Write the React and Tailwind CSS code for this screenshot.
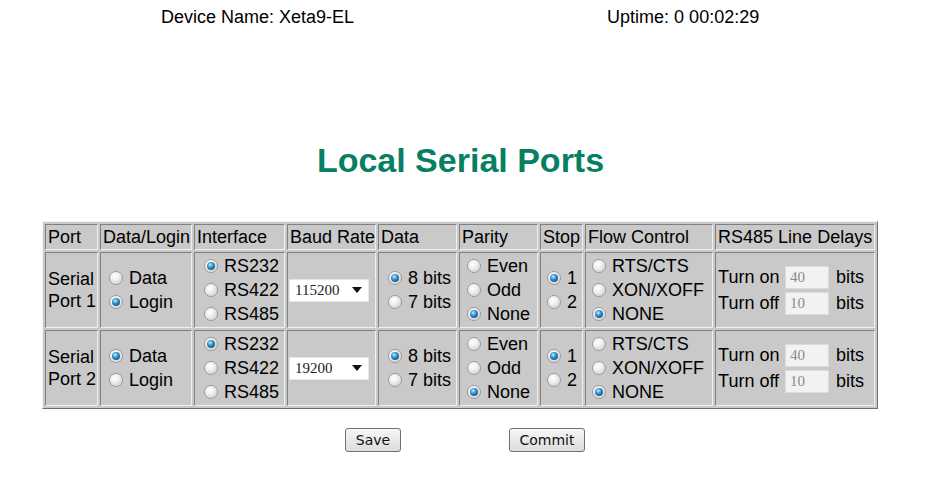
import React from "react";

const Radio = ({ checked }) => (
  <span className="relative inline-flex w-[14px] h-[14px] shrink-0 items-center justify-center rounded-full border border-[#9a9a9a] bg-[radial-gradient(circle_at_40%_35%,#ffffff_0%,#efefef_40%,#bdbdbd_100%)] shadow-[inset_0_0_1px_#ffffff]">
    {checked && (
      <span className="w-[8px] h-[8px] rounded-full bg-[radial-gradient(circle_at_40%_35%,#c2f0ff_0%,#2f8fc6_40%,#083a60_100%)]" />
    )}
  </span>
);

const Opt = ({ checked, label }) => (
  <div className="flex items-center h-[24px]">
    <Radio checked={checked} />
    <span className="ml-[6px]">{label}</span>
  </div>
);

const Group = ({ options, value, pl = "pl-[8px]" }) => (
  <div className={`flex flex-col ${pl}`}>
    {options.map((o) => (
      <Opt key={o} label={o} checked={o === value} />
    ))}
  </div>
);

const Select = ({ value }) => (
  <div className="flex items-center justify-between w-[80px] h-[23px] bg-white border border-[#e6e6e6] pl-[5px] pr-[6px] font-['Liberation_Serif',serif] text-[15px] text-[#222]">
    <span>{value}</span>
    <span className="w-0 h-0 border-l-[5px] border-r-[5px] border-t-[6px] border-l-transparent border-r-transparent border-t-[#111]" />
  </div>
);

const Delay = ({ label, value }) => (
  <div className="flex items-center h-[26px]">
    <span className="w-[67px]">{label}</span>
    <div className="w-[44px] h-[23px] bg-[#f2f2f2] border border-[#dcdcdc] pl-[4px] flex items-center font-['Liberation_Serif',serif] text-[15px] text-[#8a8a8a]">
      {value}
    </div>
    <span className="ml-[7px]">bits</span>
  </div>
);

const cell =
  "border border-t-[#808080] border-l-[#808080] border-r-[#f0f0f0] border-b-[#f0f0f0] p-0 align-middle";

const ports = [
  { n: 1, mode: "Login", iface: "RS232", baud: "115200", data: "8 bits", parity: "None", stop: "1", flow: "NONE" },
  { n: 2, mode: "Data", iface: "RS232", baud: "19200", data: "8 bits", parity: "None", stop: "1", flow: "NONE" },
];

const heads = [
  ["Port", "w-[53px]"],
  ["Data/Login", "w-[92px]"],
  ["Interface", "w-[91px]"],
  ["Baud Rate", "w-[89px]"],
  ["Data", "w-[79px]"],
  ["Parity", "w-[79px]"],
  ["Stop", "w-[43px]"],
  ["Flow Control", "w-[128px]"],
  ["RS485 Line Delays", "w-[160px]"],
];

export default function App() {
  return (
    <div className="w-[921px] bg-white text-black font-['Liberation_Sans',Arial,sans-serif] min-h-[497px]">
      {/* Status bar */}
      <div className="flex pt-[6px] text-[18px] leading-[22px]">
        <span className="ml-[161px]">Device Name: Xeta9-EL</span>
        <span className="ml-[253px]">Uptime: 0 00:02:29</span>
      </div>

      <h1 className="mt-[112px] text-center text-[34px] leading-[40px] font-bold text-[#077f62]">
        Local Serial Ports
      </h1>

      <div className="mt-[41px] ml-[42px]">
        <table className="border-separate border-spacing-[2px] bg-[#c9c9c9] border border-t-[#f4f4f4] border-l-[#f4f4f4] border-r-[#6e6e6e] border-b-[#6e6e6e] text-[18px] leading-[22px] table-fixed">
          <thead>
            <tr className="h-[26px]">
              {heads.map(([h, w]) => (
                <th key={h} className={`${cell} ${w} font-normal text-left pl-[2px] whitespace-nowrap`}>
                  {h}
                </th>
              ))}
            </tr>
          </thead>
          <tbody>
            {ports.map((p) => (
              <tr key={p.n} className="h-[76px]">
                <td className={`${cell} pl-[2px]`}>
                  Serial
                  <br />
                  Port {p.n}
                </td>
                <td className={cell}>
                  <Group options={["Data", "Login"]} value={p.mode} pl="pl-[8px]" />
                </td>
                <td className={cell}>
                  <Group options={["RS232", "RS422", "RS485"]} value={p.iface} pl="pl-[9px]" />
                </td>
                <td className={`${cell} pl-[1px]`}>
                  <Select value={p.baud} />
                </td>
                <td className={cell}>
                  <Group options={["8 bits", "7 bits"]} value={p.data} pl="pl-[9px]" />
                </td>
                <td className={cell}>
                  <Group options={["Even", "Odd", "None"]} value={p.parity} pl="pl-[7px]" />
                </td>
                <td className={cell}>
                  <Group options={["1", "2"]} value={p.stop} pl="pl-[6px]" />
                </td>
                <td className={cell}>
                  <Group options={["RTS/CTS", "XON/XOFF", "NONE"]} value={p.flow} pl="pl-[6px]" />
                </td>
                <td className={`${cell} pl-[2px]`}>
                  <Delay label="Turn on" value="40" />
                  <Delay label="Turn off" value="10" />
                </td>
              </tr>
            ))}
          </tbody>
        </table>
      </div>

      {/* Buttons */}
      <div className="flex mt-[19px] font-['DejaVu_Sans',sans-serif] text-[14px]">
        <button className="ml-[345px] w-[56px] h-[24px] rounded-[3px] border border-[#707070] bg-[linear-gradient(#f6f6f6,#dddddd)] text-[#111]">
          Save
        </button>
        <button className="ml-[108px] w-[76px] h-[24px] rounded-[3px] border border-[#707070] bg-[linear-gradient(#f6f6f6,#dddddd)] text-[#111]">
          Commit
        </button>
      </div>
    </div>
  );
}
